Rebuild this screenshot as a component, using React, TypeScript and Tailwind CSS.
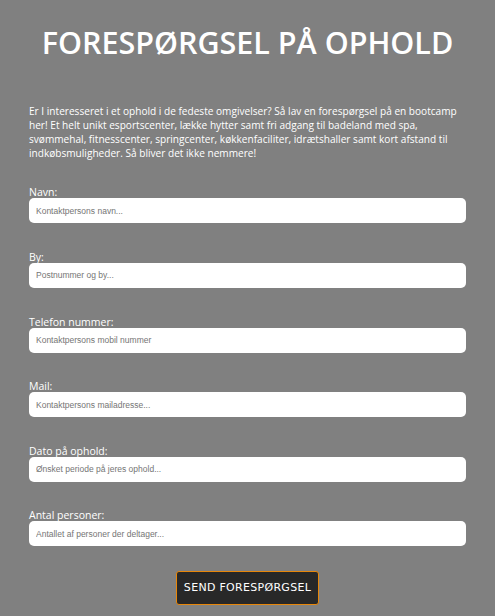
import type { ReactNode } from 'react'

const FIELDS = [
  { label: 'Navn:', placeholder: 'Kontaktpersons navn...' },
  { label: 'By:', placeholder: 'Postnummer og by...' },
  { label: 'Telefon nummer:', placeholder: 'Kontaktpersons mobil nummer' },
  { label: 'Mail:', placeholder: 'Kontaktpersons mailadresse...' },
  { label: 'Dato på ophold:', placeholder: 'Ønsket periode på jeres ophold...' },
  { label: 'Antal personer:', placeholder: 'Antallet af personer der deltager...' },
]

function Field({ label, children }: { label: string; children: ReactNode }) {
  return (
    <label className="block mb-[27.6px]">
      <span className="block text-[10.5px] leading-[12px] text-white">{label}</span>
      {children}
    </label>
  )
}

export default function App() {
  return (
    <div
      className="min-h-[616px] w-full bg-[#808080] px-[29px] pt-[22px]"
      style={{ fontFamily: '"Open Sans", "Noto Sans", sans-serif' }}
    >
      <h1 className="text-center text-[30.5px] leading-[40px] font-semibold text-white">
        FORESPØRGSEL PÅ OPHOLD
      </h1>

      <p className="mt-[41.5px] text-[10.1px] leading-[14.3px] text-white">
        Er I interesseret i et ophold i de fedeste omgivelser? Så lav en forespørgsel på en bootcamp
        her! Et helt unikt esportscenter, lække hytter samt fri adgang til badeland med spa,
        svømmehal, fitnesscenter, springcenter, køkkenfaciliter, idrætshaller samt kort afstand til
        indkøbsmuligheder. Så bliver det ikke nemmere!
      </p>

      <form className="mt-[25.7px]" onSubmit={e => e.preventDefault()}>
        {FIELDS.map(f => (
          <Field key={f.label} label={f.label}>
            <input
              type="text"
              placeholder={f.placeholder}
              className="block w-full h-[25px] rounded-[5px] bg-white px-[7px] text-[8.5px] text-[#333] placeholder:text-[#757575] outline-none"
              style={{ fontFamily: '"Liberation Sans", Arial, sans-serif' }}
            />
          </Field>
        ))}

        <div className="flex justify-center mt-[-3px]">
          <button
            type="submit"
            className="w-[143px] h-[34px] rounded-[3px] border border-[#e8870a] bg-[#282828] text-white text-[11px] tracking-[0.3px]"
            style={{ fontFamily: '"DejaVu Sans", sans-serif' }}
          >
            SEND FORESPØRGSEL
          </button>
        </div>
      </form>
    </div>
  )
}
